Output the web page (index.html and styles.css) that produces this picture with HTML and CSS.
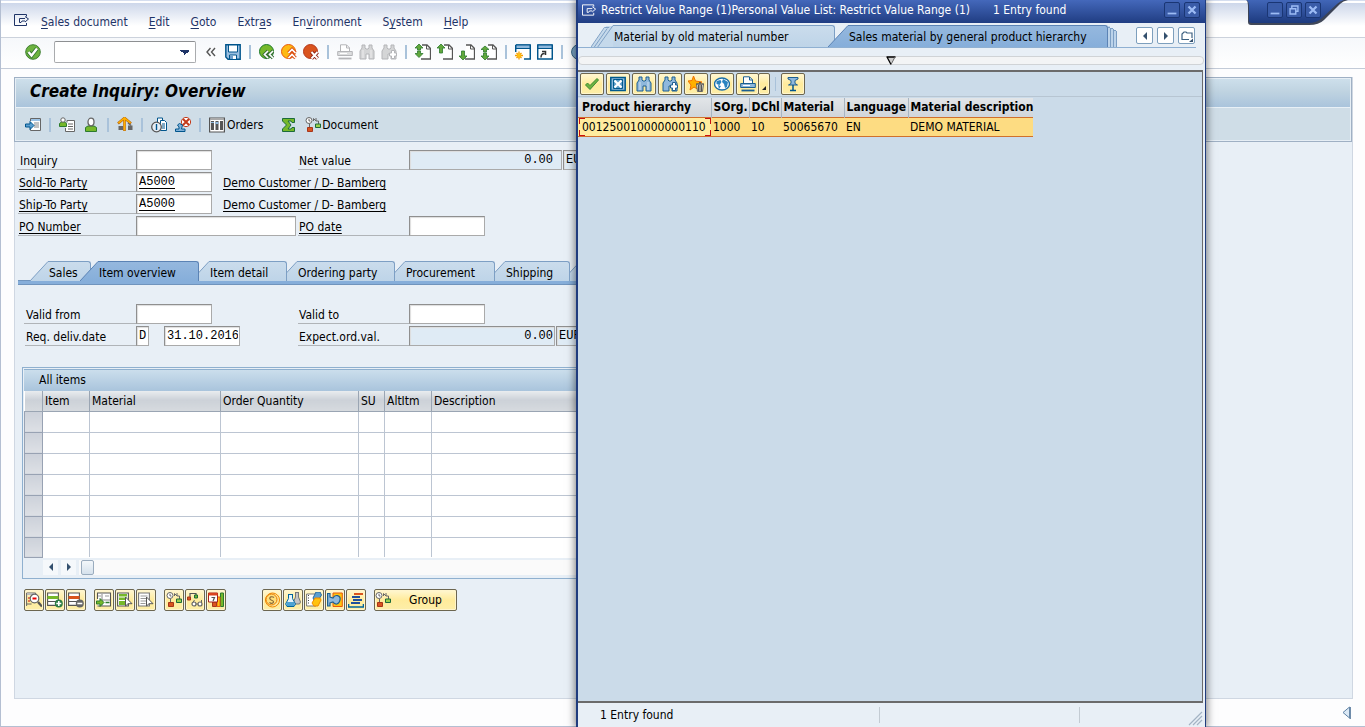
FILE: index.html
```html
<!DOCTYPE html>
<html lang="en">
<head>
<meta charset="utf-8">
<title>Create Inquiry: Overview</title>
<link rel="stylesheet" href="styles.css">
</head>
<body>
<svg class="defs" aria-hidden="true">
  <defs>
    <linearGradient id="g-cap" x1="0" y1="0" x2="0" y2="1"><stop offset="0" stop-color="#4166b8"/><stop offset="1" stop-color="#1d3a7e"/></linearGradient>
    <linearGradient id="g-tab" x1="0" y1="0" x2="0" y2="1"><stop offset="0" stop-color="#cadcec"/><stop offset="1" stop-color="#bed4e8"/></linearGradient>
    <linearGradient id="g-act" x1="0" y1="0" x2="0" y2="1"><stop offset="0" stop-color="#95b8de"/><stop offset="1" stop-color="#86aeda"/></linearGradient>
  </defs>
  <symbol id="i-exit" viewBox="0 0 16 12"><path d="M12.500 2.500V.5H.5v11h12V9M5.500 8.500v-4H11M11 2.500l3.500 2.500L11 8M5.500 8.500H7l1-1.500h3" fill="none" stroke="currentColor"/></symbol>
  <symbol id="i-ok" viewBox="0 0 16 16"><circle cx="8" cy="8" r="7.300" fill="#6db33f" stroke="#3f7f33"/><path d="M3.500 8l3 3.500 5.500-7" fill="none" stroke="#2f7030" stroke-width="4"/><path d="M3.500 8l3 3.500 5.500-7" fill="none" stroke="#fff" stroke-width="2.400"/></symbol>
  <symbol id="i-save" viewBox="0 0 16 16"><path d="M.8.8h14.400v14.400H3L.8 13z" fill="#9bbfe0" stroke="#00558c" stroke-width="1.400"/><path d="M3.500 1h9v7h-9z" fill="#fff" stroke="#00558c"/><path d="M4.500 15v-4h7v4" fill="#fff" stroke="#00558c"/><path d="M5 11.500h3V15H5z" fill="#6fa0cc"/></symbol>
  <symbol id="i-back" viewBox="0 0 16 16"><circle cx="7.500" cy="7.500" r="7" fill="#76b82a" stroke="#1c7a2c"/><path d="M9 7l-3.500 3.500L9 14M14 7l-3.500 3.500L14 14" fill="none" stroke="#356b35" stroke-width="3.400"/><path d="M9 7l-3.500 3.500L9 14M14 7l-3.500 3.500L14 14" fill="none" stroke="#fff" stroke-width="1.700"/></symbol>
  <symbol id="i-up" viewBox="0 0 16 16"><circle cx="7.500" cy="7.500" r="7" fill="#fdb913" stroke="#e8590c"/><path d="M7.500 9L11 5.500 14.500 9M7.500 14l3.500-3.500 3.500 3.500" fill="none" stroke="#d9480f" stroke-width="3.400"/><path d="M7.500 9L11 5.500 14.500 9M7.500 14l3.500-3.500 3.500 3.500" fill="none" stroke="#fff" stroke-width="1.700"/></symbol>
  <symbol id="i-cancel" viewBox="0 0 16 16"><circle cx="7.500" cy="7.500" r="7" fill="#d9541e" stroke="#b5381c"/><path d="M8.500 8l6 6.500M14.500 8l-6 6.500" stroke="#8d1e12" stroke-width="3.800"/><path d="M8.500 8l6 6.500M14.500 8l-6 6.500" stroke="#fff" stroke-width="1.900"/></symbol>
  <symbol id="i-print" viewBox="0 0 16 16"><path d="M3.500 8V.8h6l3 3V8" fill="#fff" stroke="currentColor"/><path d="M9.500 1v3h3" fill="none" stroke="currentColor"/><path d="M.7 7.500h14.600v4H.7z" fill="var(--fill,#dcddde)" stroke="currentColor"/><path d="M3 9.500h7" stroke="#fff"/><path d="M1.500 14.500h13" stroke="currentColor" stroke-width="1.800"/></symbol>
  <symbol id="i-find" viewBox="0 0 16 16"><path d="M3 1h3v3l1 1h2l1-1V1h3v3l2 3v8h-5v-5H7v5H1V7l2-3z" fill="var(--fill,#d4d5d6)" stroke="currentColor"/><path d="M4 6v8M12 6v8" stroke="#fff" stroke-opacity=".6"/></symbol>
  <symbol id="i-next" viewBox="0 0 16 16"><path d="M3 1h3v3l1 1h2l1-1V1h3v3l2 3v8h-5v-5H7v5H1V7l2-3z" fill="var(--fill,#d4d5d6)" stroke="currentColor"/><path d="M10.500 6.500h3v2.500h2v3h-2v2.500h-3V12h-2V9h2z" fill="#fff" stroke="currentColor"/></symbol>
  <symbol id="i-page" viewBox="0 0 16 16"><path d="M7 1h5l3.500 3.500V15H6" fill="#fff" stroke="#555" stroke-width="1.300"/><path d="M11.500 1v4h4" fill="none" stroke="#555"/></symbol>
  <symbol id="i-first" viewBox="0 0 16 16"><use href="#i-page"/><path d="M4 0l4 4H5.500v2H2.500V4H0zM4 13.500L0 9.500h2.500V7h3v2.500H8z" fill="#62a83c" stroke="#2c7a2e" stroke-width=".8"/></symbol>
  <symbol id="i-prev" viewBox="0 0 16 16"><use href="#i-page"/><path d="M4 0l4 4H5.500v5H2.500V4H0z" fill="#62a83c" stroke="#2c7a2e" stroke-width=".8"/></symbol>
  <symbol id="i-down" viewBox="0 0 16 16"><use href="#i-page"/><path d="M4 16l4-4H5.500V7h-3v5H0z" fill="#62a83c" stroke="#2c7a2e" stroke-width=".8"/></symbol>
  <symbol id="i-last" viewBox="0 0 16 16"><use href="#i-page"/><path d="M4 2l4 3.500H5.500V8h-3V5.500H0zM4 16l-4-4h2.500V9h3v3H8z" fill="#62a83c" stroke="#2c7a2e" stroke-width=".8"/></symbol>
  <symbol id="i-newwin" viewBox="0 0 16 16"><path d="M.7 1h14.600v14H9M.7 8V1" fill="#fff" stroke="#00558c" stroke-width="1.500"/><path d="M1 1h14v3.500H1z" fill="#8fb8dc" stroke="#00558c"/><path d="M4 7.500v8M0 11.500h8M1.500 9l5 5M6.500 9l-5 5" stroke="#f59c00" stroke-width="1.300"/><circle cx="4" cy="11.500" r="2" fill="#ffc20e"/></symbol>
  <symbol id="i-short" viewBox="0 0 16 16"><path d="M.7 1h14.600v14H.7z" fill="#fff" stroke="#00558c" stroke-width="1.500"/><path d="M1 1h14v3.500H1z" fill="#8fb8dc" stroke="#00558c"/><path d="M4 13.500c0-3 1-4 3.500-4M5 7.500h3.500V11" fill="none" stroke="#333" stroke-width="1.500"/></symbol>
  <symbol id="i-help" viewBox="0 0 16 16"><circle cx="8" cy="8" r="7.400" fill="#7fa9ca" stroke="#32617f"/></symbol>
  <symbol id="i-goto" viewBox="0 0 16 16"><path d="M5.500 4V1.500h10v12h-10V12" fill="#fff" stroke="#666"/><path d="M6 2h9v2H6z" fill="#9cc3e6"/><path d="M9 6h5M9 8h5M9 10h5" stroke="#888"/><path d="M.5 7H5V4.500L9 8.500 5 12.500V10H.5z" fill="#5b9fd0" stroke="#00558c"/></symbol>
  <symbol id="i-partner" viewBox="0 0 16 16"><path d="M8 5.500V3.500h7.500v11h-9V11" fill="#fff" stroke="#666"/><path d="M9 7h5M9 9.500h5M9 12h5" stroke="#666"/><path d="M.5 9.500v-3l2-1.500h3l2 1.500v3z" fill="#76b82a" stroke="#2c7a2e"/><circle cx="4" cy="3" r="2.200" fill="#fff" stroke="#666"/></symbol>
  <symbol id="i-person" viewBox="0 0 16 16"><path d="M2.500 14.500V10.500L5 9h6l2.500 1.500v4z" fill="#76b82a" stroke="#2c7a2e"/><ellipse cx="8" cy="5" rx="3" ry="3.800" fill="#fff" stroke="#666" stroke-width="1.300"/></symbol>
  <symbol id="i-house" viewBox="0 0 16 16"><path d="M1.500 9H6v4H1.500zM11 8.500h4.500V13H11z" fill="#666"/><path d="M1 6.500L7.500 1 14 6.500M7.500 2v12" fill="none" stroke="#b8660c" stroke-width="2.600"/><path d="M1.500 6L7.500 1l6 5M7.500 2v11.500" fill="none" stroke="#ffb000" stroke-width="1.600"/><path d="M11 6l3 2.500" stroke="#666" stroke-width="1.500"/></symbol>
  <symbol id="i-clockdoc" viewBox="0 0 16 16"><path d="M6.500 1h5v10h-5z" fill="#fff" stroke="#00558c"/><path d="M9.500 3.500h4l2 2v8h-6z" fill="#fff" stroke="#00558c"/><path d="M11 7h3M11 9h3M11 11h3" stroke="#00558c"/><circle cx="5.500" cy="10" r="4.800" fill="#e6eef5" stroke="#555" stroke-width="1.300"/><path d="M5.500 7v6" stroke="#00558c" stroke-width="1.400"/></symbol>
  <symbol id="i-stamp" viewBox="0 0 16 16"><circle cx="11" cy="5" r="4.600" fill="#fff" stroke="#c33a1a"/><path d="M8 2l6 6M14 2L8 8" stroke="#c33a1a" stroke-width="2"/><path d="M.5 14.500V12H4V10L2.500 8 4.500 6.500l3 1.500L6.500 12H10v2.500z" fill="#7fb0d8" stroke="#00558c"/></symbol>
  <symbol id="i-orders" viewBox="0 0 16 16"><path d="M.6 1h14.800v14H.6z" fill="#fff" stroke="#555" stroke-width="1.200"/><path d="M2 4h3v9H2zM6.500 4h3v9h-3zM11 4h3v9h-3z" fill="#555"/><path d="M2 5h3v1H2zM6.500 5h3v2h-3z" fill="#8fb8dc"/><path d="M1 2.500h14" stroke="#aaa"/></symbol>
  <symbol id="i-sigma" viewBox="0 0 16 16"><path d="M1.500 1.500h12v4H11l-1-1.500H7L10 8l-3 4h3l1-1.500h2.500v4h-12V12L5.500 8l-4-4z" fill="#76b82a" stroke="#1c6b3a"/></symbol>
  <symbol id="i-flow" viewBox="0 0 16 16"><circle cx="4" cy="3.500" r="3" fill="#fff" stroke="#666"/><path d="M4 1.800V4h1.500M4.500 7v3M8.500 4V1.500L11 4M11 1v3h2.500v3" fill="none" stroke="#666"/><path d="M2.500 10.500h5v4h-5z" fill="#d9541e" stroke="#a8351a"/><path d="M10.500 7h5v3.500h-5z" fill="#9bd04e" stroke="#1c6b3a"/></symbol>
  <symbol id="i-detail" viewBox="0 0 16 16"><path d="M.6 14V1h9v2M.6 12h5" fill="none" stroke="#666"/><path d="M1 1h8v2H1z" fill="#bbb"/><path d="M2 6h3M2 9h2" stroke="#c00"/><circle cx="8.500" cy="6.500" r="4.300" fill="#fff" stroke="#666" stroke-width="1.200"/><path d="M6.500 5.500h4v2h-4z" fill="#e00"/><path d="M12 10l4 4.500" stroke="#555" stroke-width="2.400"/></symbol>
  <symbol id="i-rowadd" viewBox="0 0 16 16"><path d="M.6 1h10.800v12.400H.6zM.6 9.500h9" fill="#fff" stroke="#555" stroke-width="1.100"/><path d="M.5 4h11v3H.5z" fill="#76b82a"/><circle cx="11.800" cy="11.500" r="4" fill="#2d7d46"/><path d="M11.800 9v5M9.300 11.500h5" stroke="#fff" stroke-width="1.600"/></symbol>
  <symbol id="i-rowdel" viewBox="0 0 16 16"><path d="M.6 1h10.800v12.400H.6zM.6 9.500h9" fill="#fff" stroke="#555" stroke-width="1.100"/><path d="M.5 4h11v3H.5z" fill="#d9541e"/><circle cx="11.800" cy="11.500" r="4" fill="#666"/><path d="M9.300 11.500h5" stroke="#fff" stroke-width="1.600"/></symbol>
  <symbol id="i-insert" viewBox="0 0 16 16"><path d="M1.500 7V1h13v13h-13" fill="#fff" stroke="#555" stroke-width="1.100"/><path d="M6 2v12M6 8h8" stroke="#888"/><path d="M9 3h4v2H9zM2 3h3v2H2z" fill="#ccc"/><path d="M.5 9H4V6.500l4 4-4 4V12H.5z" fill="#76b82a" stroke="#2c7a2e"/><path d="M9.500 10.500h4" stroke="#2c7a2e" stroke-width="1.500"/></symbol>
  <symbol id="i-selall" viewBox="0 0 16 16"><path d="M.6 1h10.800v13H.6z" fill="#fff" stroke="#555" stroke-width="1.100"/><path d="M2 2h8v2.500H2zM2 5.500h8V8H2zM2 9h7v4H2z" fill="#76b82a"/><path d="M8.500 5v9l2.500-2.300h4z" fill="#fff" stroke="#555"/></symbol>
  <symbol id="i-desel" viewBox="0 0 16 16"><path d="M.6 1h10.800v13H.6z" fill="#fff" stroke="#777" stroke-width="1.100"/><path d="M2.500 4h7M2.500 6.500h6M2.500 9h6M2.500 11.500h5" stroke="#999"/><path d="M8.500 5v9l2.500-2.300h4z" fill="#fff" stroke="#555"/></symbol>
  <symbol id="i-glasses" viewBox="0 0 16 16"><path d="M3 6V1.500h6V4" fill="none" stroke="#555" stroke-width="1.200"/><path d="M.5 5h3v3h-3z" fill="#d9541e" stroke="#a8351a"/><path d="M7.500 3h3v3h-3z" fill="#76b82a" stroke="#1c6b3a"/><circle cx="7" cy="12" r="2" fill="#fff" stroke="#666" stroke-width="1.200"/><circle cx="13" cy="12" r="2" fill="#fff" stroke="#666" stroke-width="1.200"/><path d="M9 12h2M5.500 11l2-3M14.500 11V8" fill="none" stroke="#666"/></symbol>
  <symbol id="i-cal" viewBox="0 0 16 16"><path d="M12.500 1h3v13.500h-3z" fill="#76b82a" stroke="#2c7a2e"/><path d="M9 5h3v9.500H9z" fill="#ffc20e" stroke="#e8590c"/><path d="M4.500 10h4v4.500h-4z" fill="#d9541e" stroke="#a8351a"/><path d="M.5 1h9v9h-9z" fill="#fff" stroke="#a8201a"/><path d="M.5 1h9v2.500h-9z" fill="#d9441e"/><path d="M3.500 5.500h3L5 9" fill="none" stroke="#555" stroke-width="1.200"/></symbol>
  <symbol id="i-coin" viewBox="0 0 16 16"><circle cx="8.500" cy="8" r="7" fill="#ffe9a0" stroke="#f08a00"/><circle cx="7.500" cy="7.500" r="5.500" fill="#ffdf7a" stroke="#e87800"/><path d="M10 5.500C8 4 5 5 6 7s4 1 3.500 3-3 1.500-4 .3" fill="none" stroke="#8a6a3a" stroke-width="1.200"/></symbol>
  <symbol id="i-flask" viewBox="0 0 16 16"><path d="M10 .5h4M10.500 .5V5l-2 5 1 2h5l1-2-2-5V.5" fill="#c4c4c4" stroke="#777"/><path d="M3 2.500h5M3.500 2.500v4L.6 12l1.400 2.500h7l1.500-2.500L7.500 6.500v-4" fill="#e6f2fa" stroke="#00649c"/><path d="M2 10h7l1 2-1 2H2l-1-2z" fill="#4da3d4"/></symbol>
  <symbol id="i-note" viewBox="0 0 16 16"><path d="M.6 2H10v12H.6z" fill="#fff" stroke="#777"/><path d="M2.500 3v10" stroke="#444" stroke-dasharray="1 1.500"/><path d="M7 6l3-6h4l1.500 3-3 5H8z" fill="#5b9fd0" stroke="#2a6a9c"/><path d="M6 11l3-5h5l1 2-3 6H8z" fill="#ffc20e" stroke="#f08a00"/></symbol>
  <symbol id="i-link" viewBox="0 0 16 16"><path d="M6 1h9.300v13.500H6z" fill="#ffc20e" stroke="#e8590c"/><path d="M.6 1.500H3V5l3 1c2-4 8-3 7 2s-5 5-7 2l-3 1v3H.6z" fill="#8fb8dc" stroke="#1c5f90" stroke-width="1.200"/></symbol>
  <symbol id="i-gantt" viewBox="0 0 16 16"><path d="M6 1h9v2H6z" fill="#d9541e"/><path d="M4 4h8v2H4zM5 7h9v2H5zM3 10h9v2H3z" fill="#1f4f9c"/><path d="M.5 12v3h15v-3" fill="none" stroke="#00649c" stroke-width="1.600"/></symbol>
  <symbol id="i-check" viewBox="0 0 16 16"><path d="M1.500 9l4.500 4.500L14.500 4l-1.500-1.500-7 7-2.500-2.500z" fill="#6db33f" stroke="#3d8a35"/></symbol>
  <symbol id="i-close" viewBox="0 0 16 16"><path d="M.8 1.500h14.400v13H.8z" fill="#8fb8dc" stroke="#005a8c" stroke-width="1.500"/><path d="M3.500 3.500h9v9h-9z" fill="#5f9cc8" stroke="#005a8c"/><path d="M4.500 4.500l7 7M11.500 4.500l-7 7" stroke="#fff" stroke-width="2.200"/></symbol>
  <symbol id="i-star" viewBox="0 0 16 16"><path d="M5.500 0l2 5 6.500 1-4 3 1 5-5-3-4 3 1-5L0 5l4-.5z" fill="#ffb000" stroke="#f07000"/><path d="M8.500 8h7l-1 7.500h-5z" fill="#e8e4d0" stroke="#666"/><path d="M8 8h8M10.500 9v6M12 9v6M13.500 9v6M11 6.500h2" stroke="#555"/></symbol>
  <symbol id="i-globe" viewBox="0 0 16 16"><ellipse cx="8" cy="8" rx="7.500" ry="6" fill="#fff" stroke="#1c6fa8" stroke-width="1.400"/><path d="M2.500 5l4-1 1 2-2 3-3-1zM9 3l5 3-1 5-2 1-1-4-2-2zM4 9l3 1-2 3z" fill="#2a84c0"/></symbol>
  <symbol id="i-pin" viewBox="0 0 16 16"><path d="M3 1.500h10V3l-3 1.500v3L12.500 9h-9L6 7.500v-3L3 3z" fill="#8fb8dc" stroke="#1c5f90"/><path d="M8 9v5.500M5 14.500h6" stroke="#00558c" stroke-width="1.500"/></symbol>
  <symbol id="i-slant" viewBox="0 0 18 20"><path d="M0 20L18 .5V20z" fill="url(#g-tab)"/><path d="M0 20L18 .5" fill="none" stroke="#7d9fc4"/></symbol>
  <symbol id="i-slant-act" viewBox="0 0 18 20"><path d="M0 20L18 .5V20z" fill="url(#g-act)"/><path d="M0 20L18 .5" fill="none" stroke="#5b83b5"/></symbol>
  <symbol id="i-min" viewBox="0 0 16 16"><path d="M3 12h10" stroke="currentColor" stroke-width="2"/></symbol>
  <symbol id="i-max" viewBox="0 0 16 16"><path d="M5.500 6V3.500h7v6H10M3.500 6.500h6.500v6H3.500z" fill="none" stroke="currentColor" stroke-width="1.600"/></symbol>
  <symbol id="i-x" viewBox="0 0 16 16"><path d="M4 4l8 8M12 4l-8 8" stroke="currentColor" stroke-width="2.600"/></symbol>
</svg>

<div class="app">
  <nav class="menubar">
    <svg class="exit"><use href="#i-exit"/></svg>
    <a href="#"><u>S</u>ales document</a><a href="#"><u>E</u>dit</a><a href="#"><u>G</u>oto</a><a href="#">Extr<u>a</u>s</a><a href="#">En<u>v</u>ironment</a><a href="#">S<u>y</u>stem</a><a href="#"><u>H</u>elp</a>
  </nav>
  <div class="toolbar">
    <button class="ib" aria-label="Enter"><svg><use href="#i-ok"/></svg></button>
    <select class="command" aria-label="Command"><option></option></select>
    <button class="ib" aria-label="Hide command field"><svg class="chev" viewBox="0 0 10 10"><path d="M4.500 1l-3.500 4 3.500 4M9 1L5.500 5 9 9" fill="none" stroke="#555" stroke-width="1.400"/></svg></button>
    <button class="ib" aria-label="Save"><svg><use href="#i-save"/></svg></button>
    <i class="sep"></i>
    <button class="ib" aria-label="Back"><svg><use href="#i-back"/></svg></button>
    <button class="ib" aria-label="Exit"><svg><use href="#i-up"/></svg></button>
    <button class="ib" aria-label="Cancel"><svg><use href="#i-cancel"/></svg></button>
    <i class="sep"></i>
    <button class="ib dim" aria-label="Print"><svg><use href="#i-print"/></svg></button>
    <button class="ib dim" aria-label="Find"><svg><use href="#i-find"/></svg></button>
    <button class="ib dim" aria-label="Find next"><svg><use href="#i-next"/></svg></button>
    <i class="sep"></i>
    <button class="ib" aria-label="First page"><svg><use href="#i-first"/></svg></button>
    <button class="ib" aria-label="Previous page"><svg><use href="#i-prev"/></svg></button>
    <button class="ib" aria-label="Next page"><svg><use href="#i-down"/></svg></button>
    <button class="ib" aria-label="Last page"><svg><use href="#i-last"/></svg></button>
    <i class="sep"></i>
    <button class="ib" aria-label="New session"><svg><use href="#i-newwin"/></svg></button>
    <button class="ib" aria-label="Create shortcut"><svg><use href="#i-short"/></svg></button>
    <i class="sep"></i>
    <button class="ib" aria-label="Help"><svg><use href="#i-help"/></svg></button>
  </div>

  <main class="screen">
    <header class="head">
      <h1>Create Inquiry: Overview</h1>
      <div class="apptools">
        <button class="ib" aria-label="Other inquiry"><svg><use href="#i-goto"/></svg></button>
        <i class="sep"></i>
        <button class="ib" aria-label="Partner list"><svg><use href="#i-partner"/></svg></button>
        <button class="ib" aria-label="Partner"><svg><use href="#i-person"/></svg></button>
        <i class="sep"></i>
        <button class="ib" aria-label="Header output"><svg><use href="#i-house"/></svg></button>
        <i class="sep"></i>
        <button class="ib" aria-label="Availability"><svg><use href="#i-clockdoc"/></svg></button>
        <button class="ib" aria-label="Reject document"><svg><use href="#i-stamp"/></svg></button>
        <i class="sep"></i>
        <button class="ib orders"><svg><use href="#i-orders"/></svg>Orders</button>
        <button class="ib" aria-label="Totals"><svg><use href="#i-sigma"/></svg></button>
        <button class="ib text"><svg><use href="#i-flow"/></svg>Document</button>
      </div>
    </header>

    <form class="work">
      <div class="form top">
        <label class="name" for="inq">Inquiry</label><div class="cell"><input id="inq" class="w76"></div>
        <label class="name" for="net">Net value</label><div class="cell"><input id="net" class="w153 ro" value="0.00" readonly><input class="w40 ro cur" value="EUR" readonly aria-label="Currency"></div>
        <label class="name link" for="sold">Sold-To Party</label><div class="cell wide"><input id="sold" class="w76 key" value="A5000"><a href="#">Demo Customer / D- Bamberg</a></div>
        <label class="name link" for="ship">Ship-To Party</label><div class="cell wide"><input id="ship" class="w76 key" value="A5000"><a href="#">Demo Customer / D- Bamberg</a></div>
        <label class="name link" for="po">PO Number</label><div class="cell"><input id="po" class="w160"></div>
        <label class="name link" for="pod">PO date</label><div class="cell"><input id="pod" class="w76"></div>
      </div>

      <div class="tabs">
        <button type="button" class="tab t1"><svg><use href="#i-slant"/></svg><span>Sales</span></button>
        <button type="button" class="tab active"><svg><use href="#i-slant-act"/></svg><span>Item overview</span></button>
        <button type="button" class="tab t2"><svg><use href="#i-slant"/></svg><span>Item detail</span></button>
        <button type="button" class="tab t3"><svg><use href="#i-slant"/></svg><span>Ordering party</span></button>
        <button type="button" class="tab t4"><svg><use href="#i-slant"/></svg><span>Procurement</span></button>
        <button type="button" class="tab t5"><svg><use href="#i-slant"/></svg><span>Shipping</span></button>
        <button type="button" class="tab" aria-label="More"><svg><use href="#i-slant"/></svg><span></span></button>
      </div>

      <div class="form dates">
        <label class="name" for="vf">Valid from</label><div class="cell"><input id="vf" class="w76"></div>
        <label class="name" for="vt">Valid to</label><div class="cell"><input id="vt" class="w76"></div>
        <label class="name" for="rd">Req. deliv.date</label><div class="cell spaced"><input class="w13" value="D" aria-label="Date type"><input id="rd" class="w76" value="31.10.2016"></div>
        <label class="name" for="ev">Expect.ord.val.</label><div class="cell"><input id="ev" class="w146 ro flush" value="0.00" readonly><input class="w40 ro cur" value="EUR" readonly aria-label="Currency"></div>
      </div>

      <section class="items">
        <div class="inner">
          <h2>All items</h2>
          <table>
            <colgroup><col class="c0"><col class="c1"><col class="c2"><col class="c3"><col class="c4"><col class="c5"><col></colgroup>
            <thead><tr><th></th><th>Item</th><th>Material</th><th>Order Quantity</th><th>SU</th><th>AltItm</th><th>Description</th></tr></thead>
            <tbody>
              <tr><th></th><td></td><td></td><td></td><td></td><td></td><td></td></tr>
              <tr><th></th><td></td><td></td><td></td><td></td><td></td><td></td></tr>
              <tr><th></th><td></td><td></td><td></td><td></td><td></td><td></td></tr>
              <tr><th></th><td></td><td></td><td></td><td></td><td></td><td></td></tr>
              <tr><th></th><td></td><td></td><td></td><td></td><td></td><td></td></tr>
              <tr><th></th><td></td><td></td><td></td><td></td><td></td><td></td></tr>
              <tr><th></th><td></td><td></td><td></td><td></td><td></td><td></td></tr>
            </tbody>
          </table>
          <div class="hscroll">
            <button type="button" aria-label="Scroll left"><svg viewBox="0 0 8 8"><path d="M6 0v8L2 4z"/></svg></button>
            <button type="button" aria-label="Scroll right"><svg viewBox="0 0 8 8"><path d="M2 0v8l4-4z"/></svg></button>
            <div class="track"><i></i></div>
          </div>
        </div>
      </section>

      <div class="actions">
        <div class="group">
          <button type="button" class="yb" aria-label="Details"><svg><use href="#i-detail"/></svg></button>
          <button type="button" class="yb" aria-label="Insert row"><svg><use href="#i-rowadd"/></svg></button>
          <button type="button" class="yb" aria-label="Delete row"><svg><use href="#i-rowdel"/></svg></button>
        </div>
        <div class="group">
          <button type="button" class="yb" aria-label="Copy row"><svg><use href="#i-insert"/></svg></button>
          <button type="button" class="yb" aria-label="Select all"><svg><use href="#i-selall"/></svg></button>
          <button type="button" class="yb" aria-label="Deselect all"><svg><use href="#i-desel"/></svg></button>
        </div>
        <div class="group">
          <button type="button" class="yb" aria-label="Availability"><svg><use href="#i-flow"/></svg></button>
          <button type="button" class="yb" aria-label="Display availability"><svg><use href="#i-glasses"/></svg></button>
          <button type="button" class="yb" aria-label="Schedule lines"><svg><use href="#i-cal"/></svg></button>
        </div>
        <div class="group second">
          <button type="button" class="yb" aria-label="Conditions"><svg><use href="#i-coin"/></svg></button>
          <button type="button" class="yb" aria-label="Batch"><svg><use href="#i-flask"/></svg></button>
          <button type="button" class="yb" aria-label="Configuration"><svg><use href="#i-note"/></svg></button>
          <button type="button" class="yb" aria-label="Substitution"><svg><use href="#i-link"/></svg></button>
          <button type="button" class="yb" aria-label="Structure"><svg><use href="#i-gantt"/></svg></button>
        </div>
        <button type="button" class="yb label"><svg><use href="#i-flow"/></svg><span>Group</span></button>
      </div>
    </form>
  </main>
  <footer class="foot"><svg viewBox="0 0 10 14"><path d="M7.500 1v11L1 6.500z" fill="#dce9f5" stroke="#5f83a6"/><path d="M8.200 1v12" stroke="#6f8caa" stroke-width="1.600"/></svg></footer>

  <div class="wincap">
    <svg class="shape" viewBox="0 0 102 27" preserveAspectRatio="none"><path d="M0 0Q2 0 2 8v14q0 3 3 3h58q10 0 15-5L94 4q3-3 8-4z" fill="#111a30" opacity=".8"/><path d="M0 0Q3 0 3 8v12q0 3 3 3h56q9 0 14-5L91 4q3-3 7-4z" fill="url(#g-cap)"/></svg>
    <div class="winbtns">
      <button class="wb" aria-label="Minimize"><svg><use href="#i-min"/></svg></button>
      <button class="wb" aria-label="Restore"><svg><use href="#i-max"/></svg></button>
      <button class="wb" aria-label="Close"><svg><use href="#i-x"/></svg></button>
    </div>
  </div>
</div>

<div class="dialog" role="dialog" aria-label="Restrict Value Range">
  <div class="dtitle">
    <svg class="exit"><use href="#i-exit"/></svg>
    <span>Restrict Value Range (1)Personal Value List: Restrict Value Range (1)</span><span class="count">1 Entry found</span>
    <button class="wb" aria-label="Minimize"><svg><use href="#i-min"/></svg></button>
    <button class="wb" aria-label="Close"><svg><use href="#i-x"/></svg></button>
  </div>
  <div class="dtabs">
    <svg class="stack" viewBox="0 0 23 22" preserveAspectRatio="none"><path d="M0 22L16 1h7v21z" fill="#c5d9eb"/><path d="M0 22L14 2.500h5M3.500 22L17 3.500M7 22L23 .5" fill="none" stroke="#7d9fc4"/></svg>
    <button class="dtab">Material by old material number</button>
    <svg class="dslant" viewBox="0 0 20 22"><path d="M0 22L20 .5V22z" fill="url(#g-act)"/><path d="M0 22L20 .5" stroke="#5b83b5"/></svg>
    <button class="dtab on">Sales material by general product hierarchy</button>
    <svg class="edge" viewBox="0 0 9 22"><path d="M0 1h2v2h3v2h3v17H0z" fill="#bcd3ea"/><path d="M2.500 3v19M5.500 4v18M8.500 6v16M0 2.500h2M3 3.500h2M6 5.500h2" fill="none" stroke="#7d9fc4"/></svg>
    <div class="dnav">
      <button aria-label="Previous tab"><svg viewBox="0 0 8 8"><path d="M6 0v8L2 4z"/></svg></button>
      <button aria-label="Next tab"><svg viewBox="0 0 8 8"><path d="M2 0v8l4-4z"/></svg></button>
      <button aria-label="Tab list"><svg viewBox="0 0 12 12"><path d="M8 9.500H1V4l2-2h2l1 1h5v5" fill="none" stroke="#3d6080" stroke-width="1.200"/><path d="M8 12h4V8.500z"/></svg></button>
    </div>
  </div>
  <div class="dbar"><svg viewBox="0 0 10 10"><path d="M1 1h8L5 8z" fill="#ccc"/><path d="M.5 1h9M1 1l4 7.500" fill="none" stroke="#000" stroke-width="1.300"/><path d="M9 1L5 8.500" stroke="#666"/></svg></div>
  <div class="dbody">
    <div class="dtools">
      <button class="yb" aria-label="Copy"><svg><use href="#i-check"/></svg></button>
      <button class="yb" aria-label="Close"><svg><use href="#i-close"/></svg></button>
      <button class="yb" aria-label="Find"><svg><use href="#i-find"/></svg></button>
      <button class="yb" aria-label="Find next"><svg><use href="#i-next"/></svg></button>
      <button class="yb" aria-label="Delete from personal list"><svg><use href="#i-star"/></svg></button>
      <button class="yb" aria-label="All values"><svg><use href="#i-globe"/></svg></button>
      <button class="yb print" aria-label="Print"><svg><use href="#i-print"/></svg></button><button class="yb arrow" aria-label="Print options"><svg viewBox="0 0 8 16"><path d="M6 10v4H2z" fill="#222"/></svg></button>
      <i class="sep"></i>
      <button class="yb" aria-label="Hold list"><svg><use href="#i-pin"/></svg></button>
    </div>
    <table class="hits">
      <colgroup><col class="h1"><col class="h2"><col class="h3"><col class="h4"><col class="h5"><col class="h6"></colgroup>
      <thead><tr><th>Product hierarchy</th><th>SOrg.</th><th>DChl</th><th>Material</th><th>Language</th><th>Material description</th></tr></thead>
      <tbody><tr><td class="cursor">001250010000000110</td><td>1000</td><td>10</td><td>50065670</td><td>EN</td><td>DEMO MATERIAL</td></tr></tbody>
    </table>
  </div>
  <div class="dstatus"><span>1 Entry found</span><span></span><span></span>
    <svg viewBox="0 0 15 15"><path d="M1 14L14 1M5 14l9-9M9 14l5-5" stroke="#a3b3c4" stroke-width="1.200"/></svg>
  </div>
</div>
</body>
</html>
```
FILE: styles.css
```css
* { box-sizing: border-box; }
body, button, input, select {
  font-family: "DejaVu Sans Condensed", "Noto Sans", sans-serif;
  font-size: 12px;
  line-height: 16px;
  color: #000;
}
body { margin: 0; background: #fff; overflow: hidden; }
button { background: none; border: 0; padding: 0; margin: 0; }
a { color: inherit; }
svg { display: block; flex: none; }
.defs { position: absolute; width: 0; height: 0; }

.app {
  position: relative;
  display: flex;
  flex-direction: column;
  min-height: 100vh;
  background: #fdfdfe;
  border-left: 1px solid #b4bfd2;
  border-bottom: 1px solid #b4bfd2;
}
.menubar {
  display: flex;
  align-items: center;
  gap: 21px;
  height: 38px;
  padding: 7px 0 0 13px;
  color: #1f3467;
  background: linear-gradient(#d5deef 0, #d5deef 1px, #fff 1px, #fff 3px, #cdd7ea 3px, #fff 26px);
  border-bottom: 1px solid #ccd2dc;
}
.menubar a { text-decoration: none; }
.menubar u { text-underline-offset: 2px; }
.exit { width: 16px; height: 12px; }
.menubar .exit { margin: 0 -10px 5px 0; }
.toolbar {
  display: flex;
  align-items: center;
  gap: 6px;
  height: 31px;
  padding: 0 24px 2px;
  background: linear-gradient(#f6f8fb, #fff);
  border-bottom: 1px solid #c3cbd8;
}
.ib { display: flex; align-items: center; gap: 2px; }
.ib svg { width: 16px; height: 16px; }
.dim { color: #b4b5b8; }
.sep { width: 2px; height: 14px; margin: 0 2px; background: #a9c2da; flex: none; }
.command {
  appearance: none;
  width: 142px;
  height: 22px;
  margin: 0 4px 0 7px;
  border: 1px solid #a9abae;
  border-top-color: #8d8f92;
  border-radius: 2px;
  background: linear-gradient(45deg, transparent 50%, #1f3467 50%) right 10px top 8px / 5px 5px no-repeat,
    linear-gradient(-45deg, transparent 50%, #1f3467 50%) right 5px top 8px / 5px 5px no-repeat, #fff;
}
.ib .chev { width: 10px; height: 10px; margin-right: 3px; }

.screen {
  flex: 1;
  display: flex;
  flex-direction: column;
  margin: 8px 12px 0 13px;
  background: #e8eff6;
  border: 1px solid #cfd7e2;
}
.head {
  margin: -1px 0 0 -1px;
  border: 1px solid #9fb0c4;
  box-shadow: inset 0 0 0 1px #e6eef5;
  background: #cfdde7;
}
h1 {
  margin: 1px;
  height: 29px;
  padding: 0 0 0 14px;
  font: italic bold 17px/25px "DejaVu Sans Condensed", "Noto Sans", sans-serif;
  background: linear-gradient(#cddfeb, #bfd3e1 45%, #aac4dc);
  border-bottom: 1px solid #e8f0f6;
}
.apptools { display: flex; align-items: center; gap: 8px; height: 32px; padding: 0 11px 1px 10px; }
.apptools .sep { margin: 0; }
.orders { margin-right: 10px; }
.text { gap: 1px; }

.work { flex: 1; }
.form { display: grid; grid-template-columns: 119px 161px 112px 1fr; row-gap: 2px; }
.form.top { padding: 8px 0 0 2px; }
.form.dates { padding: 20px 0 0 9px; grid-template-columns: 112px 161px 112px 1fr; }
.name { height: 20px; padding: 3px 0 0 3px; border-bottom: 1px solid #b0b4b8; line-height: 16px; }
.dates .name { padding-left: 2px; }
.name + .cell + .name { margin-left: 1px; padding-left: 1px; }
.link { text-decoration: underline; padding-left: 2px; text-underline-offset: 2px; }
.cell { display: flex; gap: 1px; }
.cell a { margin: 3px 0 0 10px; text-underline-offset: 2px; }
.cell.spaced { gap: 15px; }
.wide { grid-column: span 3; }
input {
  height: 20px;
  padding: 0 1px 0 2px;
  border: 1px solid #aaa;
  border-top-color: #8f8f8f;
  border-left-color: #8f8f8f;
  border-radius: 0;
  background: #fff;
  box-shadow: inset 1px 1px 1px #ddd;
  font: 12px/16px "Liberation Mono", monospace;
}
.w13 { width: 13px; }
.w40 { width: 40px; }
.w76 { width: 76px; }
.w146 { width: 146px; }
.w153 { width: 153px; }
.w160 { width: 160px; }
.ro { background: #dfebf5; text-align: right; padding-right: 8px; }
.flush { padding-right: 1px; }
.cur { text-align: left; padding-right: 0; }
.key { text-decoration: underline; text-underline-offset: 3px; }

.tabs {
  display: flex;
  align-items: flex-end;
  width: 85%;
  margin: 25px 0 0 3px;
  padding-left: 20px;
  border-bottom: 3px solid #86aeda;
  box-shadow: 0 1px #7094bd, inset 0 -1px #7094bd;
}
.tab { position: relative; display: flex; height: 20px; margin-left: -8px; text-align: left; }
.tab svg { width: 18px; height: 20px; }
.tab span {
  height: 20px;
  min-width: 20px;
  padding: 3px 0 0 1px;
  white-space: nowrap;
  background: linear-gradient(#cadcec, #bed4e8);
  border-top: 1px solid #7d9fc4;
  border-right: 1px solid #7d9fc4;
  border-radius: 0 3px 0 0;
}
.tab.active { z-index: 6; margin-left: -11px; }
.tab.active span { width: 101px; background: linear-gradient(#95b8de, #86aeda); border-color: #5b83b5; }
.t1 span { width: 43px; }
.t2 { z-index: 4; }
.t2 span { width: 78px; }
.t3 { z-index: 3; }
.t3 span { width: 98px; }
.t4 { z-index: 2; }
.t4 span { width: 90px; }
.t5 { z-index: 1; }
.t5 span { width: 65px; }

.items { width: 85%; margin: 21px 0 0 7px; border: 1px solid #8fb0cf; }
.inner { margin: 1px; border-top: 1px solid #8fb0cf; }
h2 { margin: 0; padding: 2px 0 3px 15px; font-size: 12px; line-height: 16px; font-weight: normal; background: linear-gradient(#cbdeec, #a9c4dc); }
table { border-collapse: collapse; table-layout: fixed; }
.items table { width: 100%; background: #fff; }
.items th, .items td { height: 21px; padding: 0 2px; text-align: left; font-weight: normal; border: 1px solid #bcc5d2; border-width: 0 1px 1px 0; }
.items thead th { height: 20px; background: linear-gradient(#e9ecef, #ccd1d8 45%, #d6dade); border-color: #9aa5b3; }
.items tbody th { background: linear-gradient(#ccd1da, #dde0e5); border: 1px solid #98a2b3; }
.items tbody tr:last-child > * { height: 20px; }
.items tbody tr:last-child td { border-bottom: 0; }
.c0 { width: 18px; } .c1 { width: 47px; } .c2 { width: 131px; } .c3 { width: 138px; } .c4 { width: 26px; } .c5 { width: 47px; }
.hscroll { display: flex; align-items: center; gap: 3px; height: 19px; padding-left: 19px; }
.hscroll button { display: grid; place-items: center; width: 15px; height: 15px; background: #f5f8fb; }
.hscroll svg, .dnav svg { width: 8px; height: 8px; fill: #34506e; }
.track { flex: 1; height: 15px; background: #fafafa; }
.track i { display: block; width: 13px; height: 15px; margin-left: 2px; border: 1px solid #9aacbe; border-radius: 2px; background: linear-gradient(#f3f7fa, #d5e1ec); }

.actions { display: flex; gap: 8px; padding: 10px 0 0 9px; }
.group { display: flex; gap: 1px; }
.second { margin-left: 28px; }
.yb {
  display: flex;
  align-items: center;
  justify-content: center;
  width: 20px;
  height: 22px;
  border: 1px solid #6c6650;
  border-radius: 2px;
  background: linear-gradient(#fff7d3, #ffeb9b 50%, #fdeea8);
  box-shadow: inset 0 0 0 1px #fff5cc;
}
.yb svg { width: 16px; height: 16px; }
.yb.label { justify-content: flex-start; width: 83px; }
.label span { flex: 1; padding-left: 4px; }

.foot { display: flex; align-items: center; justify-content: flex-end; height: 27px; padding-right: 13px; }
.foot svg { width: 10px; height: 14px; }

.wincap { position: absolute; top: 0; right: 17px; width: 102px; height: 27px; }
.shape { position: absolute; width: 100%; height: 100%; }
.winbtns { position: relative; display: flex; gap: 3px; padding: 2px 0 0 21px; }
.wb { display: grid; place-items: center; width: 16px; height: 16px; border: 1px solid #1a3674; border-radius: 2px; background: #3a5ca8; color: #9dbcf5; }
.wb svg { width: 14px; height: 14px; }

.dialog {
  position: absolute;
  top: 0;
  bottom: 0;
  left: 576px;
  width: 630px;
  display: flex;
  flex-direction: column;
  background: #e8eff6;
  border: 1px solid #203c7e;
  border-width: 0 1px 0 2px;
  box-shadow: 0 0 8px 1px rgba(0, 0, 0, .5);
}
.dtitle { display: flex; align-items: center; gap: 4px; height: 23px; padding: 0 5px 4px 4px; color: #fff; background: linear-gradient(#4468bb, #203d82); }
.dtitle .exit { width: 15px; }
.dtitle span { white-space: nowrap; }
.dtitle .count { margin: 0 auto 0 19px; }
.dtabs { display: flex; height: 23px; margin: 2px 9px 0 0; padding-left: 13px; border-bottom: 1px solid #8fb0d2; }
.dtabs > svg { height: 22px; }
.stack { width: 22px; }
.dtab { height: 22px; padding: 0 0 0 1px; width: 222px; text-align: left; background: linear-gradient(#cadcec, #bed4e8); border-top: 1px solid #7d9fc4; border-right: 1px solid #7d9fc4; border-radius: 0 3px 0 0; }
.dslant { position: relative; width: 20px; margin-left: -7px; }
.dtab.on { width: 260px; background: linear-gradient(#95b8de, #86aeda); border-color: #5b83b5; }
.edge { width: 9px; }
.dnav { display: flex; gap: 4px; margin: 2px 1px 0 auto; }
.dnav button { display: grid; place-items: center; width: 17px; height: 17px; background: #fff; border: 1px solid #7d9fbd; border-radius: 2px; }
.dnav button:last-child svg { width: 12px; height: 12px; }
.dbar { height: 9px; margin: 8px 1px 0 0; border: 1px solid #d0d3d6; border-radius: 4px; background: #f3f4f5; }
.dbar svg { width: 10px; height: 10px; margin: -1px auto 0; }
.dbody { flex: 1; margin: 5px 2px 0 0; border: 1px solid #6b6b6b; border-width: 2px 1px 2px 0; background: #cbdbe9; }
.dtools { display: flex; align-items: center; gap: 2px; height: 25px; padding: 0 2px; border-bottom: 1px solid #b7c5d2; }
.dtools .yb { width: 24px; color: #1c5f90; --fill: #8fb8dc; }
.dtools .yb.print { width: 23px; }
.dtools .yb.arrow { width: 12px; margin-left: -3px; }
.dtools .arrow svg { width: 8px; }
.dtools .sep { width: 1px; margin: 0 3px; }
.hits { width: 455px; margin: 1px 0 0; }
.h1 { width: 133px; } .h2 { width: 38px; } .h3 { width: 32px; } .h4 { width: 63px; } .h5 { width: 64px; } .h6 { width: 125px; }
.hits th, .hits td { height: 19px; padding: 0 2px; text-align: left; white-space: nowrap; }
.hits th:first-child, .hits td:first-child { padding-left: 4px; }
.hits th { background: linear-gradient(#e2e5e8, #d0d5da); border-right: 1px solid #a9b5c1; }
.hits th:last-child { border-right: 0; }
.hits td { background: #fddc82; border: 1px solid #d0702c; border-width: 1px 0; }
.hits td.cursor {
  --r: linear-gradient(#c81010, #c81010);
  background: var(--r) 1px 0 / 6px 1px, var(--r) 1px 100% / 6px 1px, var(--r) 100% 0 / 6px 1px, var(--r) 100% 100% / 6px 1px,
    var(--r) 1px 0 / 1px 6px, var(--r) 1px 100% / 1px 6px, var(--r) 100% 0 / 1px 6px, var(--r) 100% 100% / 1px 6px, #ffec9f;
  background-repeat: no-repeat;
}
.dstatus { display: flex; align-items: center; height: 24px; padding: 0 2px 0 22px; }
.dstatus span { flex: none; width: 200px; height: 16px; border-right: 1px solid #c3cbd3; }
.dstatus span:first-child { width: 280px; }
.dstatus span:nth-child(3) { flex: 1; border: 0; }
.dstatus svg { width: 15px; height: 15px; margin-top: 6px; }
```
